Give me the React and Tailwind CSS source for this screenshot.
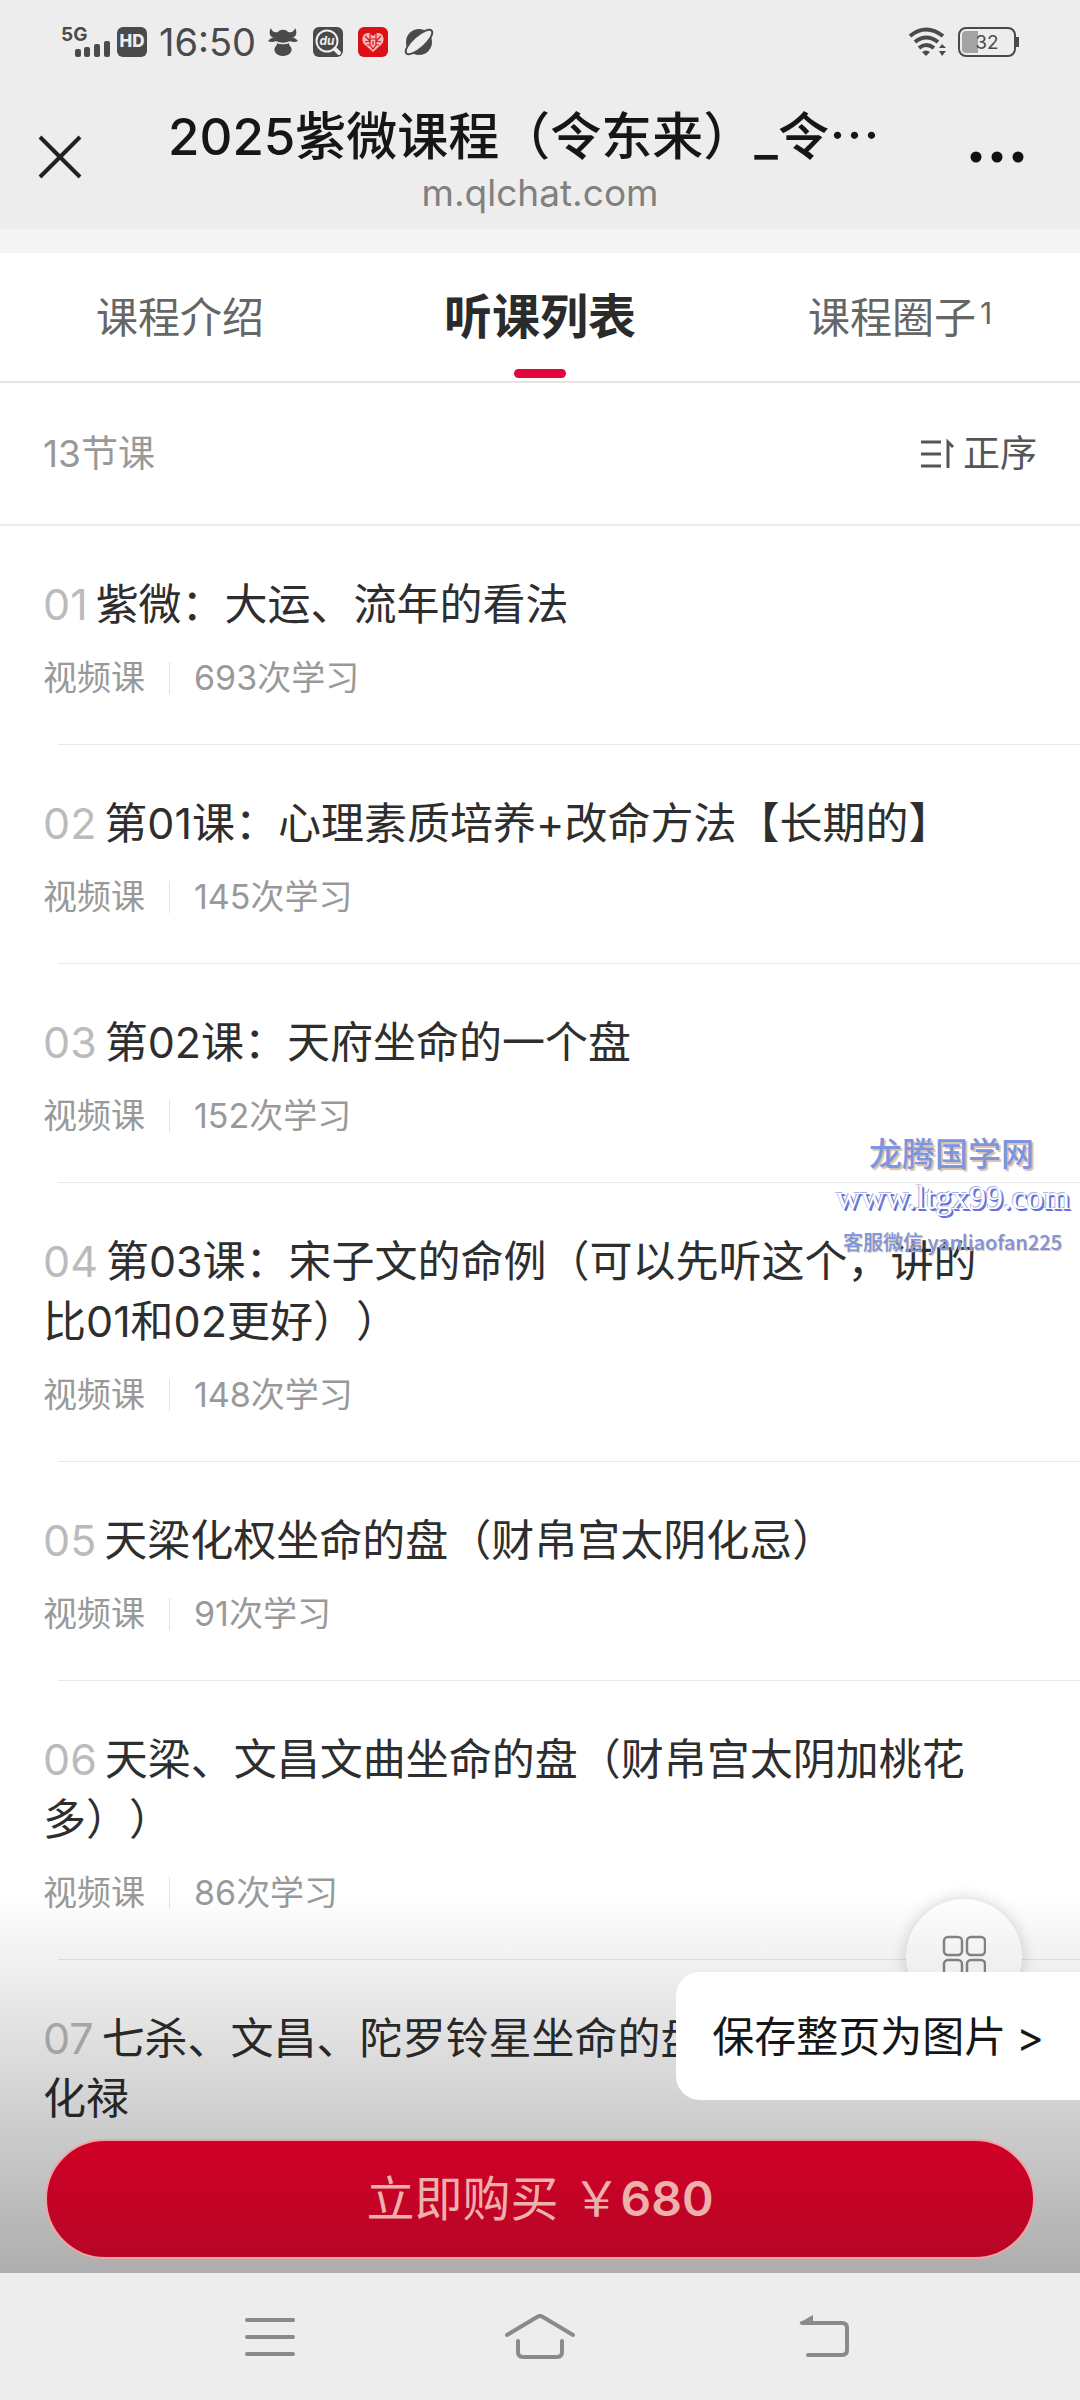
const lessons = [
  { no: '01', title: '紫微：大运、流年的看法', count: 693 },
  { no: '02', title: '第01课：心理素质培养+改命方法【长期的】', count: 145 },
  { no: '03', title: '第02课：天府坐命的一个盘', count: 152 },
  { no: '04', title: '第03课：宋子文的命例（可以先听这个，讲的比01和02更好））', count: 148 },
  { no: '05', title: '天梁化权坐命的盘（财帛宫太阴化忌）', count: 91 },
  { no: '06', title: '天梁、文昌文曲坐命的盘（财帛宫太阴加桃花多））', count: 86 },
  { no: '07', title: '七杀、文昌、陀罗铃星坐命的盘\n化禄' },
];

function SignalIcon() {
  return (
    <svg width="50" height="34" viewBox="0 0 50 34" fill="#4a4a4a" aria-hidden="true">
      <rect x="14" y="24" width="6" height="8" rx="2" />
      <rect x="23" y="22" width="6" height="10" rx="2" />
      <rect x="33" y="19" width="6" height="13" rx="2" />
      <rect x="43" y="16" width="6" height="16" rx="2" />
    </svg>
  );
}

function BullIcon() {
  return (
    <svg width="30" height="30" viewBox="0 0 30 30" aria-hidden="true">
      <g fill="#4a4a4a">
        <path d="M3 1 C0 6 2 11 8 11 H22 C28 11 30 6 27 1 C26 5 23 6 20 5 C18 2 12 2 10 5 C7 6 4 5 3 1 Z" />
        <path d="M0 14 Q3 10 9 10 H21 Q27 10 30 14 Q26 16 22 14 V19 C26 23 22 29 15 29 C8 29 4 23 8 19 V14 Q4 16 0 14 Z" />
      </g>
      <path d="M8 15 Q15 18 22 15" fill="none" stroke="#ededed" strokeWidth="1.5" />
      <circle cx="7" cy="17" r="2" fill="#ededed" />
      <circle cx="23" cy="17" r="2" fill="#ededed" />
    </svg>
  );
}

function SearchAppIcon() {
  return (
    <span className="relative flex h-[30px] w-[30px] items-center justify-center rounded-md bg-[#4a4a4a]">
      <svg className="absolute inset-0" width="30" height="30" viewBox="0 0 30 30" fill="none" stroke="#ededed" aria-hidden="true">
        <circle cx="14" cy="14" r="10.5" strokeWidth="2" />
        <path d="M22 22 L26 26" strokeWidth="4" strokeLinecap="round" />
      </svg>
      <span className="mr-0.5 mb-0.5 text-[12px] leading-none font-bold text-[#ededed] italic">du</span>
    </span>
  );
}

function HeartAppIcon() {
  return (
    <svg width="30" height="30" viewBox="0 0 30 30" aria-hidden="true">
      <rect width="30" height="30" rx="6" fill="#dc1018" />
      <path d="M15 25 L6 17 C2 11 6 5 11 6 L15 9 L19 6 C24 5 28 11 24 17 Z" fill="#f6b9b9" />
      <path
        d="M7 9 L12 14 L7 15 M23 9 L18 14 L23 15 M12 7 V18 L15 22 L18 18 V7 M12 12 H18 M9 18 L12 18 M18 18 H21 M15 14 V18"
        fill="none"
        stroke="#dc1018"
        strokeWidth="1.2"
      />
    </svg>
  );
}

function PlanetIcon() {
  return (
    <svg width="32" height="30" viewBox="0 0 32 30" aria-hidden="true">
      <circle cx="16" cy="15" r="13" fill="#4a4a4a" />
      <ellipse cx="16" cy="15" rx="17" ry="6" transform="rotate(-42 16 15)" fill="#ededed" stroke="#4a4a4a" strokeWidth="2" />
    </svg>
  );
}

function WifiIcon() {
  return (
    <svg width="40" height="30" viewBox="0 0 40 30" fill="none" stroke="#4a4a4a" strokeWidth="4" aria-hidden="true">
      <path d="M2 9 Q18 -4 35 9" />
      <path d="M7 15 Q18 6 30 15" />
      <path d="M11 21 Q18 15 26 21" />
      <path d="M14 25 Q18 22 22 25 L18 29 Z" fill="#4a4a4a" stroke="none" />
      <path d="M31 21 L34 17 L38 21 Z M31 24 L34 29 L38 24 Z" fill="#4a4a4a" stroke="none" />
    </svg>
  );
}

function StatusBar() {
  return (
    <div className="flex h-[84px] items-center justify-between px-[61px]">
      <div className="flex items-center">
        <div className="relative mr-1.5 flex">
          <SignalIcon />
          <span className="absolute top-0 left-0 text-[19px] leading-5 font-bold text-[#4a4a4a]">5G</span>
        </div>
        <span className="mr-3 flex h-[30px] w-[30px] items-center justify-center rounded-md bg-[#4a4a4a] text-[17px] font-extrabold text-[#ededed]">
          HD
        </span>
        <span className="mr-3 text-[38px] leading-none text-[#4a4a4a]">16:50</span>
        <div className="flex items-center gap-[15px]">
          <BullIcon />
          <SearchAppIcon />
          <HeartAppIcon />
          <PlanetIcon />
        </div>
      </div>
      <div className="flex items-center gap-2.5">
        <WifiIcon />
        <div className="flex items-center">
          <span className="relative flex h-[30px] w-[58px] items-center justify-center rounded-lg border-2 border-[#4a4a4a] text-[19px] leading-none text-[#4a4a4a]">
            <span className="absolute top-0.5 bottom-0.5 left-0.5 w-4 rounded-l-sm bg-[#a3a3a3]" />
            <span className="relative">32</span>
          </span>
          <span className="h-2.5 w-[3px] bg-[#4a4a4a]" />
        </div>
      </div>
    </div>
  );
}

function TitleBar() {
  return (
    <div className="flex h-[145px] items-center justify-between px-[38px]">
      <button type="button" aria-label="关闭" className="flex w-[90px]">
        <svg width="44" height="44" viewBox="0 0 44 44" stroke="#222" strokeWidth="4" aria-hidden="true">
          <path d="M2 2 L42 42 M42 2 L2 42" />
        </svg>
      </button>
      <div className="flex flex-col items-center pt-1">
        <h1 className="pr-8 text-[51px] leading-[68px] font-medium text-[#161616]">2025紫微课程（令东来）_令⋯</h1>
        <p className="text-[37px] leading-[44px] text-[#808080]">m.qlchat.com</p>
      </div>
      <button type="button" aria-label="更多" className="flex w-[90px] justify-end pr-[18px]">
        <svg width="54" height="12" viewBox="0 0 54 12" fill="#111" aria-hidden="true">
          <circle cx="6" cy="6" r="5.5" />
          <circle cx="27" cy="6" r="5.5" />
          <circle cx="48" cy="6" r="5.5" />
        </svg>
      </button>
    </div>
  );
}

function Tabs() {
  return (
    <nav className="grid h-[130px] grid-cols-3 border-b-2 border-[#e4e4e4] bg-white text-[42px] text-[#666]">
      <button type="button">课程介绍</button>
      <button type="button" className="relative text-[48px] font-bold text-[#2b2b2b]">
        听课列表
        <span className="absolute bottom-[3px] left-1/2 h-[9px] w-[52px] -translate-x-1/2 rounded-full bg-[#e3063d]" />
      </button>
      <button type="button" className="flex items-center justify-center gap-1">
        课程圈子
        <span className="mb-2 text-[30px]">1</span>
      </button>
    </nav>
  );
}

function Lesson({ lesson }) {
  return (
    <li className="group">
      <a href="#lesson" className="block pt-12 pr-[72px] pb-[42px] pl-[43px]">
        <h2 className="text-[43px] leading-[60px] whitespace-pre-line text-[#2e2e2e]">
          <span className="mr-2 text-[#bbb]">{lesson.no}</span>
          {lesson.title}
        </h2>
        {lesson.count && (
          <p className="mt-5 flex items-center text-[34px] leading-[48px] text-[#999]">
            视频课
            <span className="mx-6 h-8 w-px bg-[#e2e2e2]" />
            {lesson.count}次学习
          </p>
        )}
      </a>
      <div className="ml-[58px] h-px bg-[#e8e8e8] group-last:hidden" />
    </li>
  );
}

function Watermark() {
  return (
    <div className="pointer-events-none absolute top-[903px] right-[10px] flex flex-col items-end whitespace-nowrap">
      <span className="mr-9 text-[33px] leading-[44px] font-medium text-[#7b95e0] [text-shadow:2px_2px_1px_#d9bfae]">龙腾国学网</span>
      <span className="font-['Liberation_Serif'] text-[34px] leading-[44px] text-white [text-shadow:1px_1px_0_#6472d8,-1px_-1px_0_#a9b1ea,2px_2px_0_#6472d8]">
        www.ltgx99.com
      </span>
      <span className="mr-2 font-['Noto_Sans_CJK_SC'] text-[20px] leading-[44px] font-medium text-[#7b95e0] [text-shadow:1px_1px_1px_#d9bfae]">
        客服微信 yanliaofan225
      </span>
    </div>
  );
}

function BottomNav() {
  return (
    <nav className="grid h-[127px] shrink-0 grid-cols-3 bg-[#ededed] px-[132px] [&>button]:flex [&>button]:items-center [&>button]:justify-center">
      <button type="button" aria-label="菜单" className="pl-1">
        <svg width="50" height="40" viewBox="0 0 50 40" stroke="#8a8a8a" strokeWidth="4" strokeLinecap="round" aria-hidden="true">
          <path d="M2 3 H48 M2 20 H48 M2 37 H48" />
        </svg>
      </button>
      <button type="button" aria-label="主页">
        <svg width="72" height="46" viewBox="0 0 72 46" fill="none" stroke="#8a8a8a" strokeWidth="4" strokeLinecap="round" aria-hidden="true">
          <path d="M3 21 L33 3 Q36 1 39 3 L69 21" />
          <path d="M14 27 V38 Q14 43 19 43 H53 Q58 43 58 38 V27" />
        </svg>
      </button>
      <button type="button" aria-label="返回" className="pl-6">
        <svg width="52" height="44" viewBox="0 0 52 44" fill="none" stroke="#8a8a8a" strokeWidth="4" strokeLinecap="round" aria-hidden="true">
          <path d="M4 8 H44 Q49 8 49 13 V35 Q49 40 44 40 H10" />
          <path d="M1 8 L15 0 V9 Z" fill="#8a8a8a" stroke="none" />
        </svg>
      </button>
    </nav>
  );
}

export default function App() {
  return (
    <div className="flex h-screen flex-col bg-white font-[Inter,'Noto_Sans_CJK_SC',sans-serif] [text-spacing-trim:space-all]">
      <header className="shrink-0 bg-[#ededed]">
        <StatusBar />
        <TitleBar />
      </header>

      <main className="relative min-h-0 flex-1 overflow-hidden">
        <div className="h-6 bg-[#f5f5f5]" />
        <Tabs />
        <div className="flex h-[143px] items-center justify-between border-b-2 border-[#ebebeb] px-[43px] text-[37px]">
          <span className="text-[#999]">13节课</span>
          <button type="button" className="flex items-center gap-2 text-[#555]">
            <svg width="34" height="32" viewBox="0 0 34 32" fill="none" stroke="#555" strokeWidth="3" aria-hidden="true">
              <path d="M0 4 H20 M0 16 H20 M0 28 H20 M27 30 V4 L32 9" />
            </svg>
            正序
          </button>
        </div>

        <ul>
          {lessons.map((lesson) => (
            <Lesson key={lesson.no} lesson={lesson} />
          ))}
        </ul>

        <Watermark />

        {/* Floating menu */}
        <button
          type="button"
          aria-label="更多功能"
          className="absolute right-[58px] bottom-[258px] flex h-[116px] w-[116px] items-center justify-center rounded-full bg-white shadow-[0_0_16px_rgba(0,0,0,0.18)]"
        >
          <svg width="44" height="44" viewBox="0 0 44 44" fill="none" stroke="#888" strokeWidth="2.5" aria-hidden="true">
            <rect x="2" y="2" width="18" height="18" rx="4" />
            <rect x="25" y="2" width="18" height="18" rx="4" />
            <rect x="2" y="25" width="18" height="18" rx="4" />
            <rect x="25" y="25" width="18" height="18" rx="4" />
          </svg>
        </button>

        {/* Purchase bar */}
        <div className="absolute inset-x-0 bottom-0 flex h-[380px] flex-col justify-end bg-linear-to-b from-black/0 to-black/32 px-[45px] pb-3.5">
          <button
            type="button"
            className="flex h-[120px] items-center justify-center gap-3.5 rounded-full border-2 border-[#eba5a5] bg-linear-to-b from-[#d00026] to-[#b80626] text-[48px] text-[#eeb0ac]"
          >
            立即购买
            <span>
              ￥<strong className="font-semibold">680</strong>
            </span>
          </button>
        </div>

        <button
          type="button"
          className="absolute right-0 bottom-[173px] flex h-[128px] items-center gap-2.5 rounded-l-3xl bg-white pr-9 pl-9 text-[42px] text-[#161616]"
        >
          保存整页为图片 <span>&gt;</span>
        </button>
      </main>

      <BottomNav />
    </div>
  );
}
